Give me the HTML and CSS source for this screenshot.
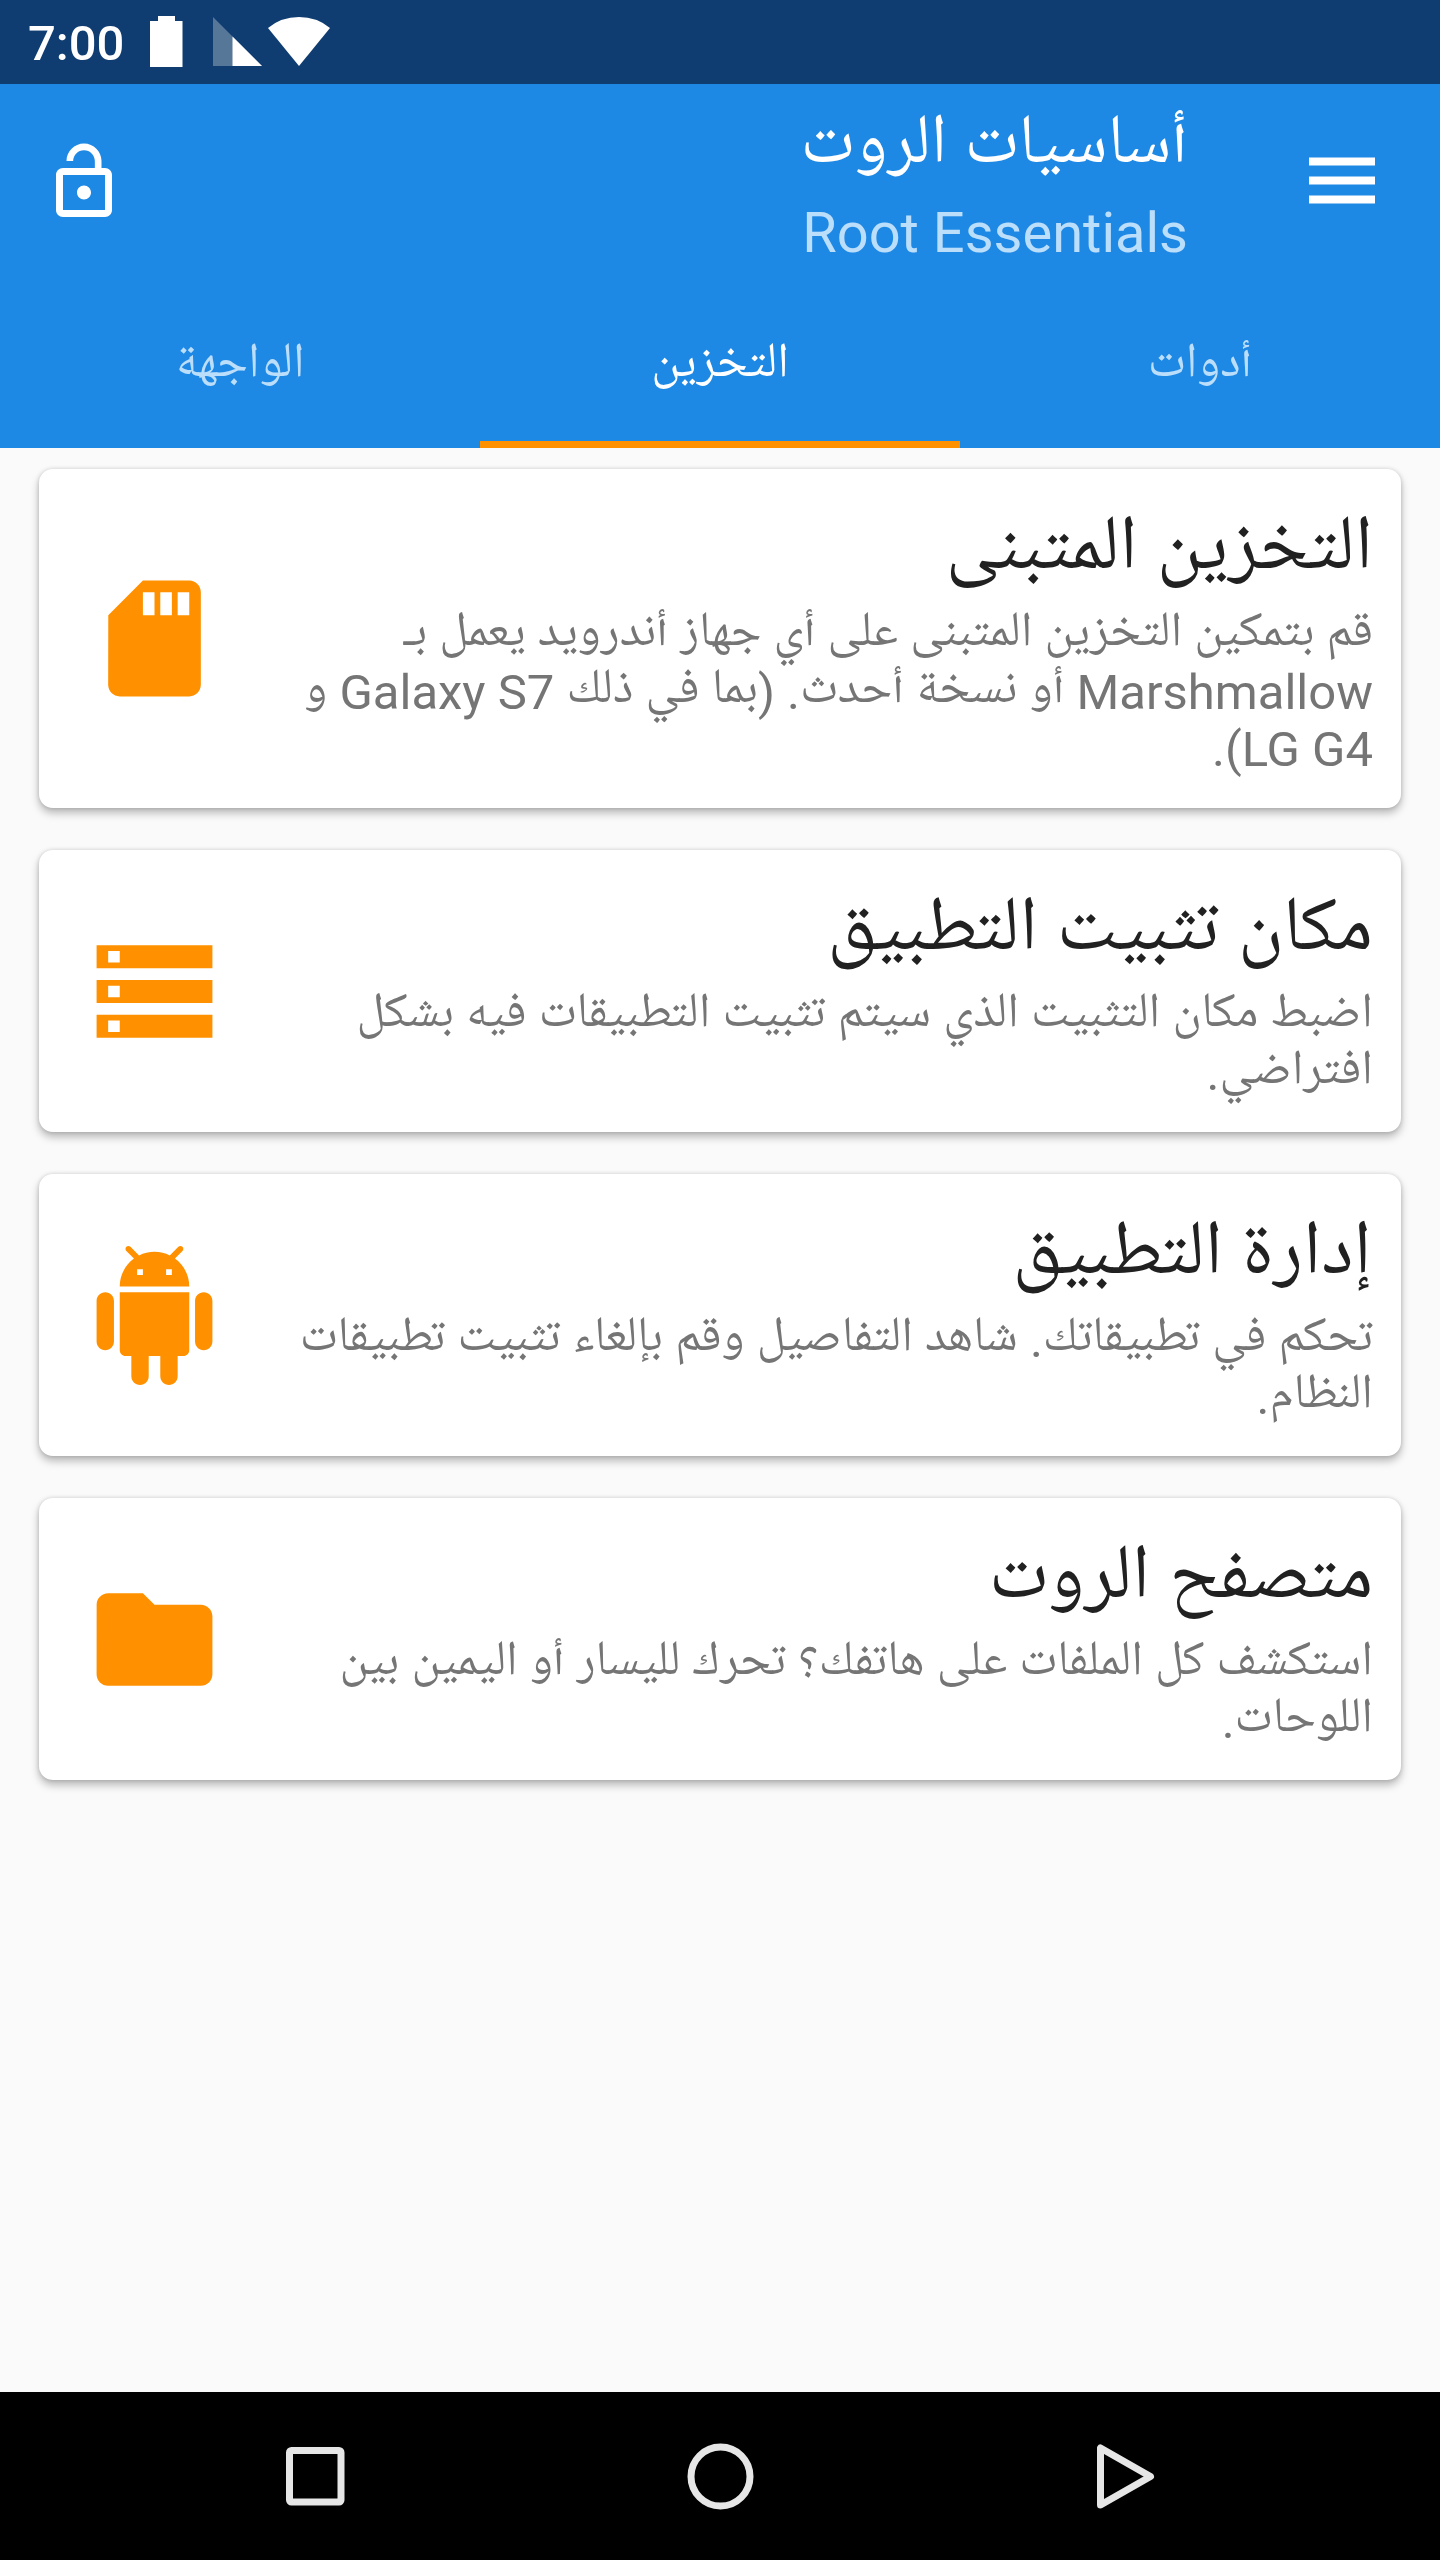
FILE: index.html
```html
<!DOCTYPE html>
<html lang="ar" dir="rtl">
    <head>
        <meta charset="UTF-8" />
        <meta name="viewport" content="width=device-width, initial-scale=1.0" />
        <title>Root Essentials</title>
        <link rel="stylesheet" href="styles.css">
    </head>
    <body>
        <div class="status-bar" dir="ltr">
            <span class="clock">7:00</span>
            <svg class="status-icons" width="200" height="84" viewBox="140 0 200 84">
                <path fill="#fff" d="M158 16h17v5h7.500v46H150V21h8z" />
                <path fill="#577799" d="M213 17l49 49h-49z" />
                <path fill="#fff" d="M232.500 36.500L262 66h-29.500z" />
                <path fill="#fff" d="M299 66L268 28Q281 17 299 17T330 28z" />
            </svg>
        </div>

        <header class="app-bar">
            <div class="toolbar">
                <svg class="menu-icon" width="84" height="84" viewBox="0 0 84 84">
                    <path fill="#fff" d="M9 17.500h66v8h-66zM9 36.500h66v8h-66zM9 55.500h66v8h-66z" />
                </svg>
                <div class="titles">
                    <h1>أساسيات الروت</h1>
                    <p dir="ltr">Root Essentials</p>
                </div>
                <svg class="lock-icon" width="84" height="84" viewBox="0 0 24 24">
                    <path fill="#fff" d="M12 17c1.100 0 2-.9 2-2s-.9-2-2-2-2 .9-2 2 .9 2 2 2zm6-9h-1V6c0-2.760-2.240-5-5-5S7 3.240 7 6h1.900c0-1.710 1.390-3.100 3.100-3.100s3.100 1.390 3.100 3.100v2H6c-1.100 0-2 .9-2 2v10c0 1.100.9 2 2 2h12c1.100 0 2-.9 2-2V10c0-1.100-.9-2-2-2zm0 12H6V10h12v10z" />
                </svg>
            </div>
            <nav class="tabs">
                <a class="tab">أدوات</a>
                <a class="tab active">التخزين</a>
                <a class="tab">الواجهة</a>
            </nav>
        </header>

        <main class="cards">
            <section class="card">
                <div class="card-text">
                    <h2>التخزين المتبنى</h2>
                    <p>قم بتمكين التخزين المتبنى على أي جهاز أندرويد يعمل بـ<br>Marshmallow أو نسخة أحدث. (بما في ذلك Galaxy S7 و<br>LG G4).</p>
                </div>
                <svg class="card-icon" viewBox="0 0 24 24">
                    <path d="M18 2h-8L4.020 8 4 20c0 1.100.9 2 2 2h12c1.100 0 2-.9 2-2V4c0-1.100-.9-2-2-2zm-6 6h-2V4h2v4zm3 0h-2V4h2v4zm3 0h-2V4h2v4z" />
                </svg>
            </section>
            <section class="card">
                <div class="card-text">
                    <h2>مكان تثبيت التطبيق</h2>
                    <p>اضبط مكان التثبيت الذي سيتم تثبيت التطبيقات فيه بشكل<br>افتراضي.</p>
                </div>
                <svg class="card-icon" viewBox="0 0 24 24">
                    <path d="M2 20h20v-4H2v4zm2-3h2v2H4v-2zM2 4v4h20V4H2zm4 3H4V5h2v2zm-4 7h20v-4H2v4zm2-3h2v2H4v-2z" />
                </svg>
            </section>
            <section class="card">
                <div class="card-text">
                    <h2>إدارة التطبيق</h2>
                    <p>تحكم في تطبيقاتك. شاهد التفاصيل وقم بإلغاء تثبيت تطبيقات<br>النظام.</p>
                </div>
                <svg class="card-icon" viewBox="0 0 24 24">
                    <path d="M6 18c0 .55.450 1 1 1h1v3.500c0 .83.670 1.500 1.500 1.500s1.500-.67 1.500-1.500V19h2v3.500c0 .83.670 1.500 1.500 1.500s1.500-.67 1.500-1.500V19h1c.55 0 1-.45 1-1V8H6v10zM3.500 8C2.670 8 2 8.670 2 9.500v7c0 .83.670 1.500 1.500 1.500S5 17.330 5 16.500v-7C5 8.670 4.330 8 3.500 8zm17 0c-.83 0-1.500.67-1.500 1.500v7c0 .83.670 1.500 1.500 1.500s1.500-.67 1.500-1.500v-7c0-.83-.67-1.500-1.500-1.500zm-4.970-5.840l1.300-1.300c.2-.2.2-.51 0-.71-.2-.2-.51-.2-.71 0l-1.480 1.480C13.850 1.230 12.950 1 12 1c-.96 0-1.860.23-2.660.63L7.850.15c-.2-.2-.51-.2-.71 0-.2.2-.2.51 0 .71l1.310 1.310C6.970 3.260 6 5.010 6 7h12c0-1.990-.97-3.750-2.470-4.840zM10 5H9V4h1v1zm5 0h-1V4h1v1z" />
                </svg>
            </section>
            <section class="card">
                <div class="card-text">
                    <h2>متصفح الروت</h2>
                    <p>استكشف كل الملفات على هاتفك؟ تحرك لليسار أو اليمين بين<br>اللوحات.</p>
                </div>
                <svg class="card-icon" viewBox="0 0 24 24">
                    <path d="M10 4H4c-1.100 0-1.990.9-1.990 2L2 18c0 1.100.9 2 2 2h16c1.100 0 2-.9 2-2V8c0-1.100-.9-2-2-2h-8l-2-2z" />
                </svg>
            </section>
        </main>

        <footer class="nav-bar" dir="ltr">
            <svg width="72" height="72" viewBox="0 0 72 72">
                <rect x="10.500" y="10.500" width="51.500" height="51.500" rx="2" />
            </svg>
            <svg width="72" height="72" viewBox="0 0 72 72">
                <circle cx="36.500" cy="36.500" r="29.500" />
            </svg>
            <svg width="72" height="72" viewBox="0 0 72 72">
                <path d="M11.500 8v57L61.500 36.500z" />
            </svg>
        </footer>
    </body>
</html>
```
FILE: styles.css
```css
* {
    box-sizing: border-box;
}
body {
    margin: 0;
    width: 1440px;
    height: 2560px;
    display: flex;
    flex-direction: column;
    background-color: #fafafa;
    font-family: Roboto, "Noto Naskh Arabic UI", "Noto Naskh Arabic", "Noto Sans Arabic", sans-serif;
}
h1,
h2,
p {
    margin: 0;
    font-weight: 400;
    white-space: nowrap;
}
.status-bar {
    height: 84px;
    display: flex;
    background-color: #0f3d72;
    color: white;
}
.clock {
    width: 140px;
    padding-left: 28px;
    font-size: 49px;
    font-weight: 500;
    line-height: 88px;
}
.app-bar {
    height: 364px;
    background-color: #1e88e5;
    color: white;
}
.toolbar {
    height: 196px;
    padding: 0 42px;
    display: flex;
    align-items: center;
}
.menu-icon {
    margin-right: 14px;
}
.titles {
    margin-right: 112px;
    flex: 1;
}
.titles h1 {
    font-size: 70px;
    line-height: 102px;
}
.titles p {
    font-size: 56px;
    line-height: 70px;
    text-align: right;
    color: #bbdefb;
}
.tabs {
    height: 168px;
    display: flex;
}
.tab {
    flex: 1;
    text-align: center;
    font-size: 49px;
    line-height: 174px;
    color: #bbdefb;
}
.tab.active {
    color: white;
    border-bottom: 7px solid #ff9100;
}
.cards {
    flex: 1;
    padding: 21px 39px;
    display: flex;
    flex-direction: column;
    gap: 42px;
}
.card {
    height: 282px;
    padding: 37px 28px 0 46px;
    display: flex;
    justify-content: space-between;
    background-color: white;
    border-radius: 14px;
    box-shadow: 0 5px 8px rgba(0, 0, 0, 0.27), 0 0 4px rgba(0, 0, 0, 0.14);
}
.card:first-child {
    height: 339px;
}
.card-text h2 {
    font-size: 77px;
    line-height: 92px;
    color: #212121;
}
.card-text p {
    margin-top: 9px;
    font-size: 49px;
    line-height: 57px;
    color: #757575;
}
.card-icon {
    width: 139px;
    height: 139px;
    align-self: center;
    margin-top: -37px;
    fill: #ff9100;
}
.nav-bar {
    height: 168px;
    padding: 0 279px;
    display: flex;
    align-items: center;
    justify-content: space-between;
    background-color: black;
}
.nav-bar svg {
    fill: none;
    stroke: #e6e6e6;
    stroke-width: 7;
    stroke-linejoin: round;
}
```
